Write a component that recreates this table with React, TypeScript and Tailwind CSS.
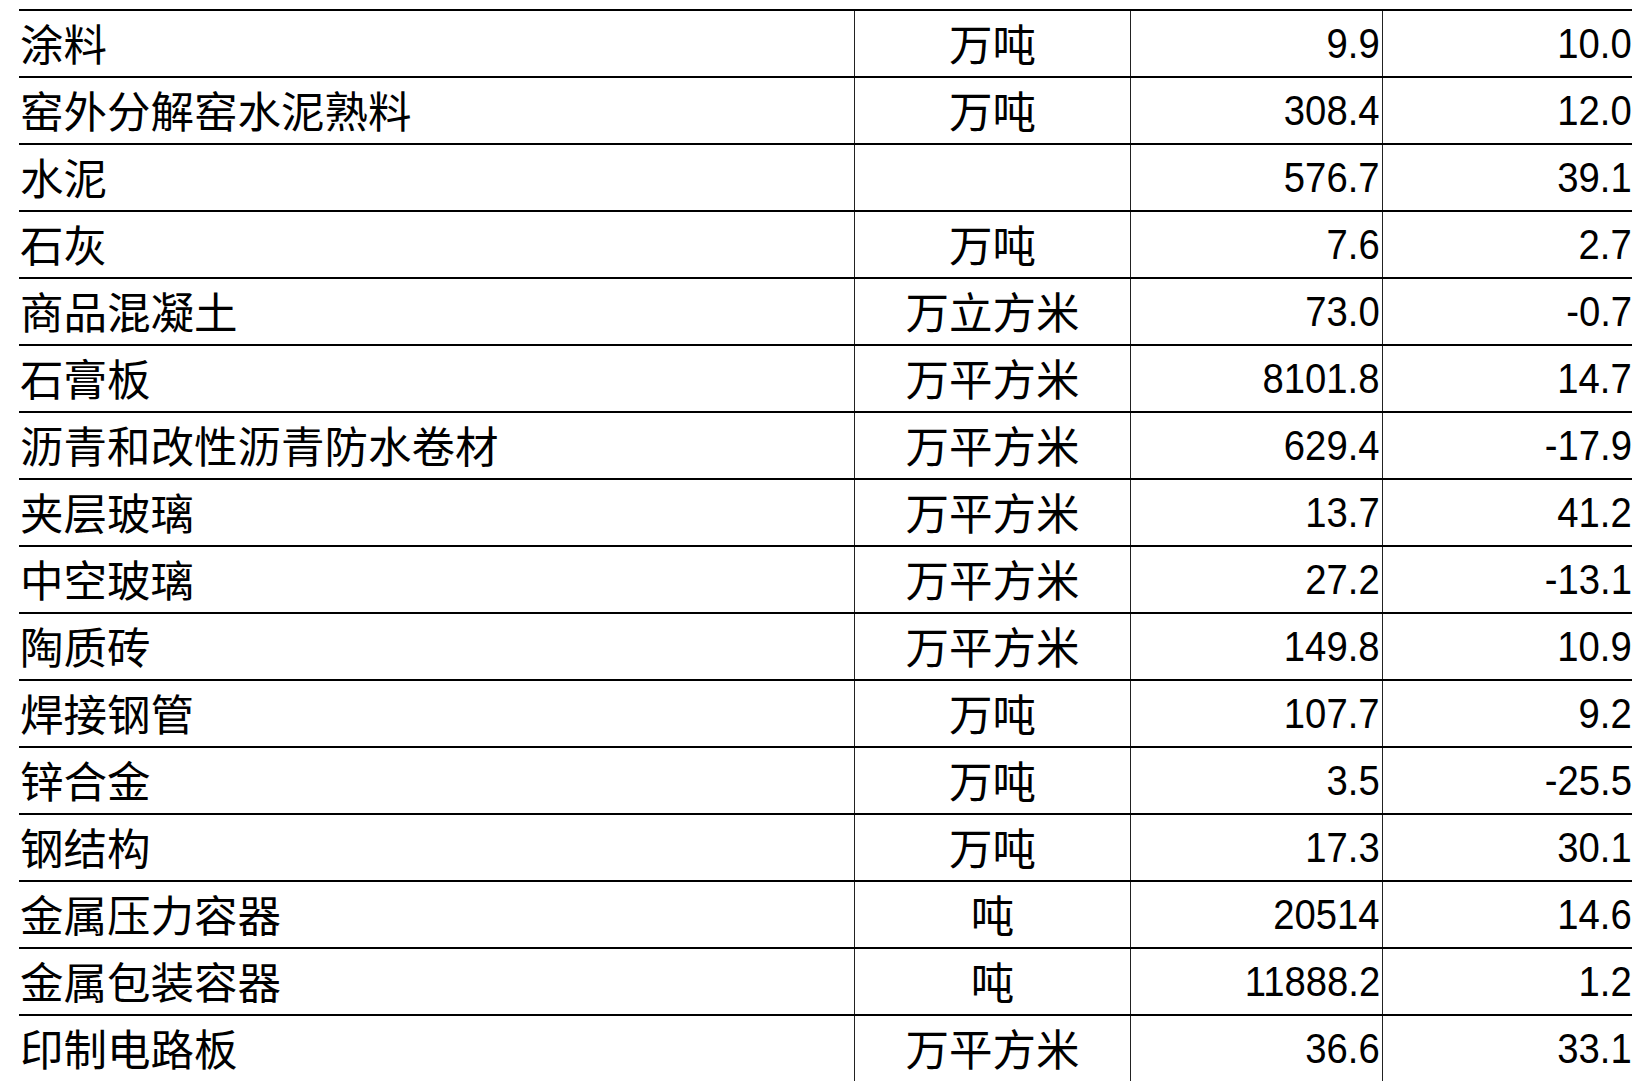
import * as React from 'react'

type Row = {
    name: string
    unit: string
    output: string
    growth: string
}

const rows: Row[] = [
    { name: '涂料', unit: '万吨', output: '9.9', growth: '10.0' },
    { name: '窑外分解窑水泥熟料', unit: '万吨', output: '308.4', growth: '12.0' },
    { name: '水泥', unit: '', output: '576.7', growth: '39.1' },
    { name: '石灰', unit: '万吨', output: '7.6', growth: '2.7' },
    { name: '商品混凝土', unit: '万立方米', output: '73.0', growth: '-0.7' },
    { name: '石膏板', unit: '万平方米', output: '8101.8', growth: '14.7' },
    { name: '沥青和改性沥青防水卷材', unit: '万平方米', output: '629.4', growth: '-17.9' },
    { name: '夹层玻璃', unit: '万平方米', output: '13.7', growth: '41.2' },
    { name: '中空玻璃', unit: '万平方米', output: '27.2', growth: '-13.1' },
    { name: '陶质砖', unit: '万平方米', output: '149.8', growth: '10.9' },
    { name: '焊接钢管', unit: '万吨', output: '107.7', growth: '9.2' },
    { name: '锌合金', unit: '万吨', output: '3.5', growth: '-25.5' },
    { name: '钢结构', unit: '万吨', output: '17.3', growth: '30.1' },
    { name: '金属压力容器', unit: '吨', output: '20514', growth: '14.6' },
    { name: '金属包装容器', unit: '吨', output: '11888.2', growth: '1.2' },
    { name: '印制电路板', unit: '万平方米', output: '36.6', growth: '33.1' },
]

const cjk = "font-['Noto_Sans_CJK_SC',sans-serif] text-[43.5px] leading-none"
// narrow helvetica look: squeeze Liberation Sans from the right edge
const num = "inline-block origin-right scale-x-[0.89] font-['Liberation_Sans',sans-serif] text-[43px] leading-none"

export default function App() {
    return (
        <div className="h-screen overflow-hidden bg-white text-black">
            <div className="ml-[19px] mt-[9px] w-[1613px]">
                {rows.map((row) => (
                    <div
                        key={row.name}
                        className="grid h-[67px] grid-cols-[835px_276px_252px_250px] border-t-2 border-black"
                    >
                        {/* product name */}
                        <div className={`flex items-center pl-[1px] pb-[2px] ${cjk}`}>
                            {row.name}
                        </div>
                        {/* unit */}
                        <div className={`flex items-center justify-center border-l border-[#222] pb-[2px] ${cjk}`}>
                            {row.unit}
                        </div>
                        {/* output */}
                        <div className="flex items-center justify-end border-l border-[#222] pr-[2px]">
                            <span className={num}>{row.output}</span>
                        </div>
                        {/* growth % */}
                        <div className="flex items-center justify-end border-l border-[#222]">
                            <span className={num}>{row.growth}</span>
                        </div>
                    </div>
                ))}
            </div>
        </div>
    )
}
